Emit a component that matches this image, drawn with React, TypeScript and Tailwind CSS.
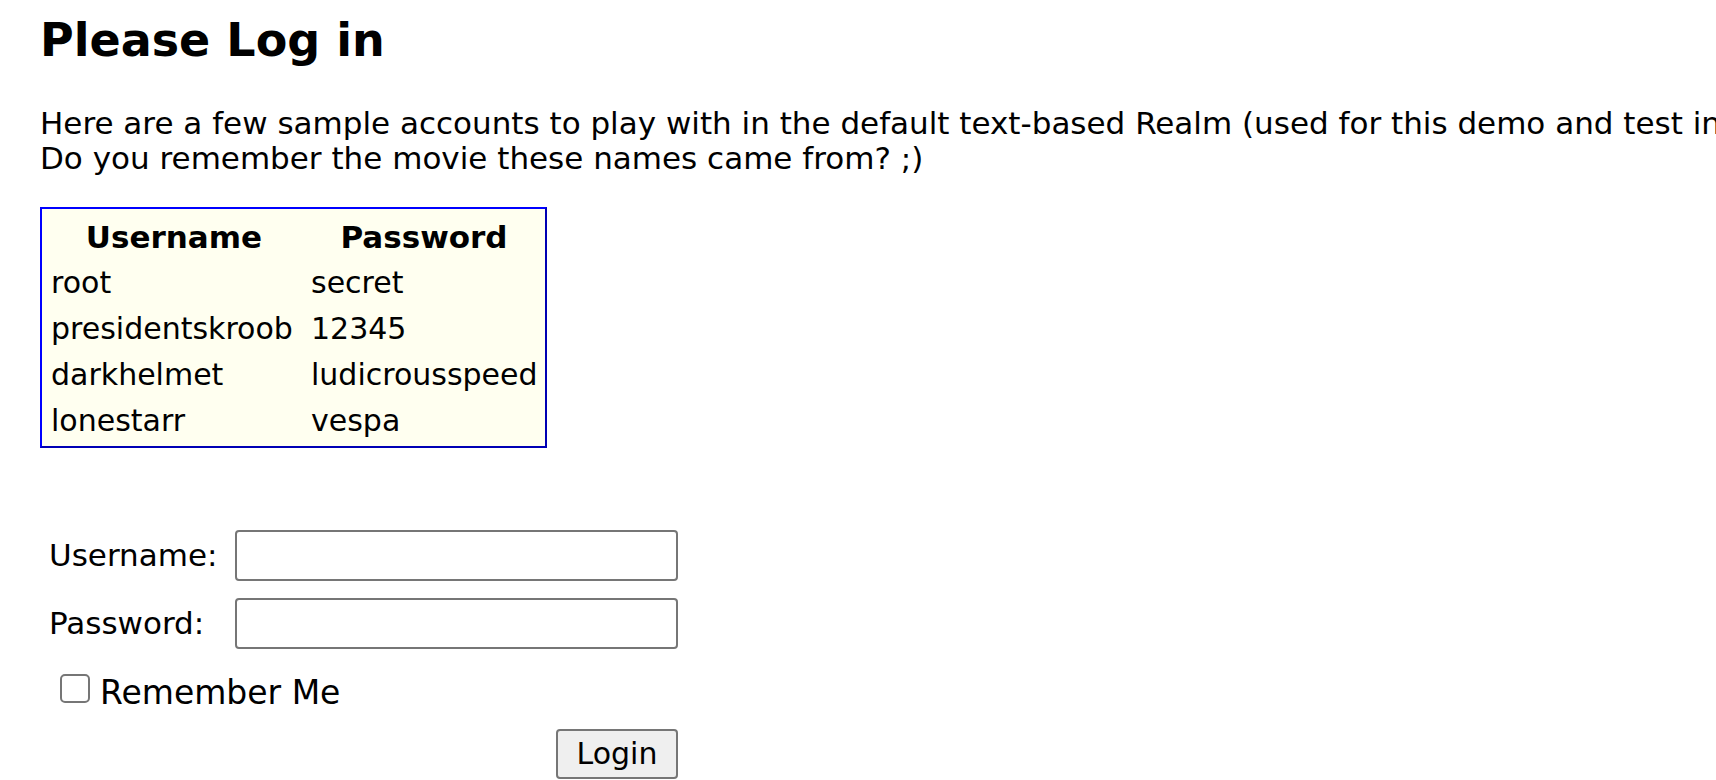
import React from "react";

const accounts: [string, string][] = [
  ["root", "secret"],
  ["presidentskroob", "12345"],
  ["darkhelmet", "ludicrousspeed"],
  ["lonestarr", "vespa"],
];

export default function App() {
  return (
    <div className="min-h-screen w-full overflow-hidden bg-white pl-10 pt-[14px] text-black font-['DejaVu_Sans','Verdana',sans-serif]">
      <h1 className="text-[46px] font-bold leading-[52px] whitespace-nowrap">Please Log in</h1>

      <p className="mt-[40px] text-[31px] leading-[35px] whitespace-nowrap">
        Here are a few sample accounts to play with in the default text-based Realm (used for this demo and test installs only).
        <br />
        Do you remember the movie these names came from? ;)
      </p>

      <div className="mt-[31px] w-[507px] border-2 border-[#0000ff] border-r-[#0000b4] border-b-[#0000b4] bg-[#fffff0] pl-[9px] pr-[4px] pt-[5px] pb-[2px]">
        <div className="grid grid-cols-[260px_1fr] text-[30px] leading-[46px]">
          <div className="pr-[14px] text-center text-[31px] font-bold">Username</div>
          <div className="pr-[4px] text-center text-[31px] font-bold">Password</div>
          {accounts.map(([u, p]) => (
            <React.Fragment key={u}>
              <div className="whitespace-nowrap">{u}</div>
              <div className="whitespace-nowrap">{p}</div>
            </React.Fragment>
          ))}
        </div>
      </div>

      <form className="mt-[82px] w-[638px] text-[31px]" onSubmit={(e) => e.preventDefault()}>
        <div className="flex h-[51px] items-center">
          <label htmlFor="username" className="w-[195px] pl-[9px] leading-[35px] whitespace-nowrap">Username:</label>
          <input
            id="username"
            type="text"
            className="h-[51px] w-[443px] rounded-[4px] border-2 border-[#767676] bg-white px-2 text-[28px] outline-none"
          />
        </div>
        <div className="mt-[17px] flex h-[51px] items-center">
          <label htmlFor="password" className="w-[195px] pl-[9px] leading-[35px] whitespace-nowrap">Password:</label>
          <input
            id="password"
            type="password"
            className="h-[51px] w-[443px] rounded-[4px] border-2 border-[#767676] bg-white px-2 text-[28px] outline-none"
          />
        </div>
        <div className="mt-[20px] flex items-start pl-[20px]">
          <span className="mt-[5px] block h-[29px] w-[30px] shrink-0 rounded-[5px] border-2 border-[#767676] bg-white" />
          <span className="ml-[10px] mt-[5px] text-[33px] leading-[38px] whitespace-nowrap">Remember Me</span>
        </div>
        <div className="mt-[17px] flex justify-end">
          <button
            type="submit"
            className="h-[50px] w-[122px] rounded-[4px] border-2 border-[#767676] bg-[#efefef] text-[30px] leading-[44px]"
          >
            Login
          </button>
        </div>
      </form>
    </div>
  );
}
